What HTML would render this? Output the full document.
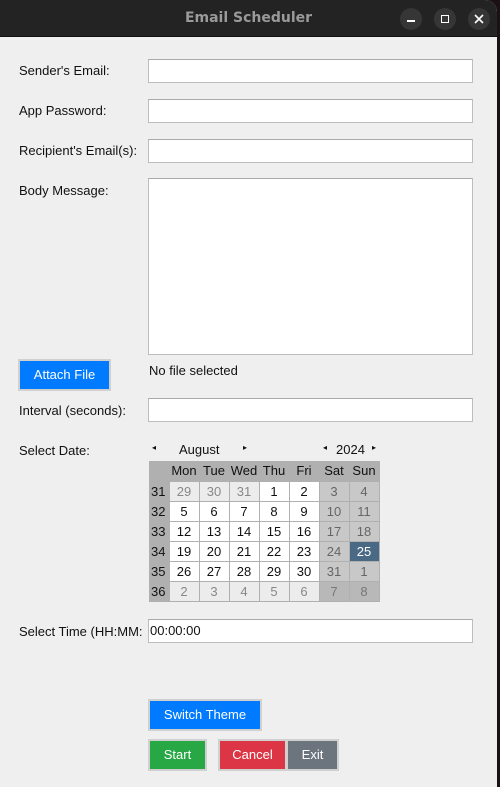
<!DOCTYPE html>
<html><head><meta charset="utf-8"><style>
*{margin:0;padding:0;box-sizing:border-box}
body{width:500px;height:787px;background:#1a1016;position:relative;overflow:hidden;font-family:"Liberation Sans","DejaVu Sans",sans-serif}
#win{position:absolute;left:0;top:0;width:497px;height:787px;background:#efefef;border-top-right-radius:12px;overflow:hidden}
#tb{position:absolute;left:0;top:0;width:497px;height:37px;background:#232323;border-bottom:1px solid #111}
#tb .t{position:absolute;left:0;width:497px;top:10px;text-align:center;color:#9a9a9a;font-weight:bold;font-size:14px;font-family:"DejaVu Sans",sans-serif}
.cb{position:absolute;top:8px;width:22px;height:22px;border-radius:50%;background:#363636;color:#fff}
.l{position:absolute;font-size:13px;color:#111;left:19px;white-space:nowrap}
.e{position:absolute;left:148px;width:325px;height:24px;background:#fff;border:1px solid #bdbdbd;border-top-color:#aaa}
.b{position:absolute;color:#fff;font-size:13px;text-align:center;border:2px solid #d0d0d0;line-height:27px}
table{position:absolute;left:149px;top:461px;border-collapse:collapse;font-size:13px;background:#b0b0b0}
td{width:30px;height:20px;text-align:center;border:1px solid #b0b0b0;color:#111;padding:0}
td.w{width:20px;background:#b0b0b0;text-align:left;padding-left:2px;border:none}
tr.h td{border:none;background:#b0b0b0}
td.d{background:#fff}td.o{background:#ececec;color:#888}td.s{background:#c8c8c8;color:#666}td.so{background:#b8b8b8;color:#777}
td.sel{background:#4a6984;color:#fff}
.cal{position:absolute;font-size:13px;color:#111}
</style></head><body>
<div id="win">
<div id="tb"><div class="t">Email Scheduler</div>
<div class="cb" style="left:400px"><div style="position:absolute;left:7px;top:12px;width:8px;height:1.5px;background:#fff"></div></div>
<div class="cb" style="left:434px"><div style="position:absolute;left:7px;top:7px;width:8px;height:8px;border:1.5px solid #fff"></div></div>
<div class="cb" style="left:468px"><svg width="22" height="22" style="position:absolute;left:0;top:0"><path d="M7 7L15 15M15 7L7 15" stroke="#fff" stroke-width="1.6"/></svg></div>
</div>
<div class="l" style="top:63px">Sender's Email:</div><div class="e" style="top:59px"></div>
<div class="l" style="top:103px">App Password:</div><div class="e" style="top:99px"></div>
<div class="l" style="top:143px">Recipient's Email(s):</div><div class="e" style="top:139px"></div>
<div class="l" style="top:183px">Body Message:</div><div class="e" style="top:178px;height:177px"></div>
<div class="b" style="left:18px;top:359px;width:93px;height:32px;background:#007bff">Attach File</div>
<div class="l" style="left:149px;top:363px">No file selected</div>
<div class="l" style="top:403px">Interval (seconds):</div><div class="e" style="top:398px"></div>
<div class="l" style="top:443px">Select Date:</div>
<div class="cal" style="left:152px;top:443px;font-size:8px">◂</div>
<div class="cal" style="left:179px;top:442px">August</div>
<div class="cal" style="left:243px;top:443px;font-size:8px">▸</div>
<div class="cal" style="left:323px;top:443px;font-size:8px">◂</div>
<div class="cal" style="left:336px;top:442px">2024</div>
<div class="cal" style="left:372px;top:443px;font-size:8px">▸</div>
<table>
<tr class="h"><td class="w"></td><td>Mon</td><td>Tue</td><td>Wed</td><td>Thu</td><td>Fri</td><td>Sat</td><td>Sun</td></tr>
<tr><td class="w">31</td><td class="o">29</td><td class="o">30</td><td class="o">31</td><td class="d">1</td><td class="d">2</td><td class="s">3</td><td class="s">4</td></tr>
<tr><td class="w">32</td><td class="d">5</td><td class="d">6</td><td class="d">7</td><td class="d">8</td><td class="d">9</td><td class="s">10</td><td class="s">11</td></tr>
<tr><td class="w">33</td><td class="d">12</td><td class="d">13</td><td class="d">14</td><td class="d">15</td><td class="d">16</td><td class="s">17</td><td class="s">18</td></tr>
<tr><td class="w">34</td><td class="d">19</td><td class="d">20</td><td class="d">21</td><td class="d">22</td><td class="d">23</td><td class="s">24</td><td class="sel">25</td></tr>
<tr><td class="w">35</td><td class="d">26</td><td class="d">27</td><td class="d">28</td><td class="d">29</td><td class="d">30</td><td class="s">31</td><td class="s">1</td></tr>
<tr><td class="w">36</td><td class="o">2</td><td class="o">3</td><td class="o">4</td><td class="o">5</td><td class="o">6</td><td class="so">7</td><td class="so">8</td></tr>
</table>
<div class="l" style="top:624px">Select Time (HH:MM:</div>
<div class="e" style="top:619px;font-size:13px;padding:3px 1px;color:#111">00:00:00</div>
<div class="b" style="left:148px;top:699px;width:114px;height:32px;background:#007bff">Switch Theme</div>
<div class="b" style="left:148px;top:739px;width:59px;height:32px;background:#28a745">Start</div>
<div class="b" style="left:218px;top:739px;width:69px;height:32px;background:#dc3545">Cancel</div>
<div class="b" style="left:286px;top:739px;width:53px;height:32px;background:#6c757d">Exit</div>
</div>
</body></html>
